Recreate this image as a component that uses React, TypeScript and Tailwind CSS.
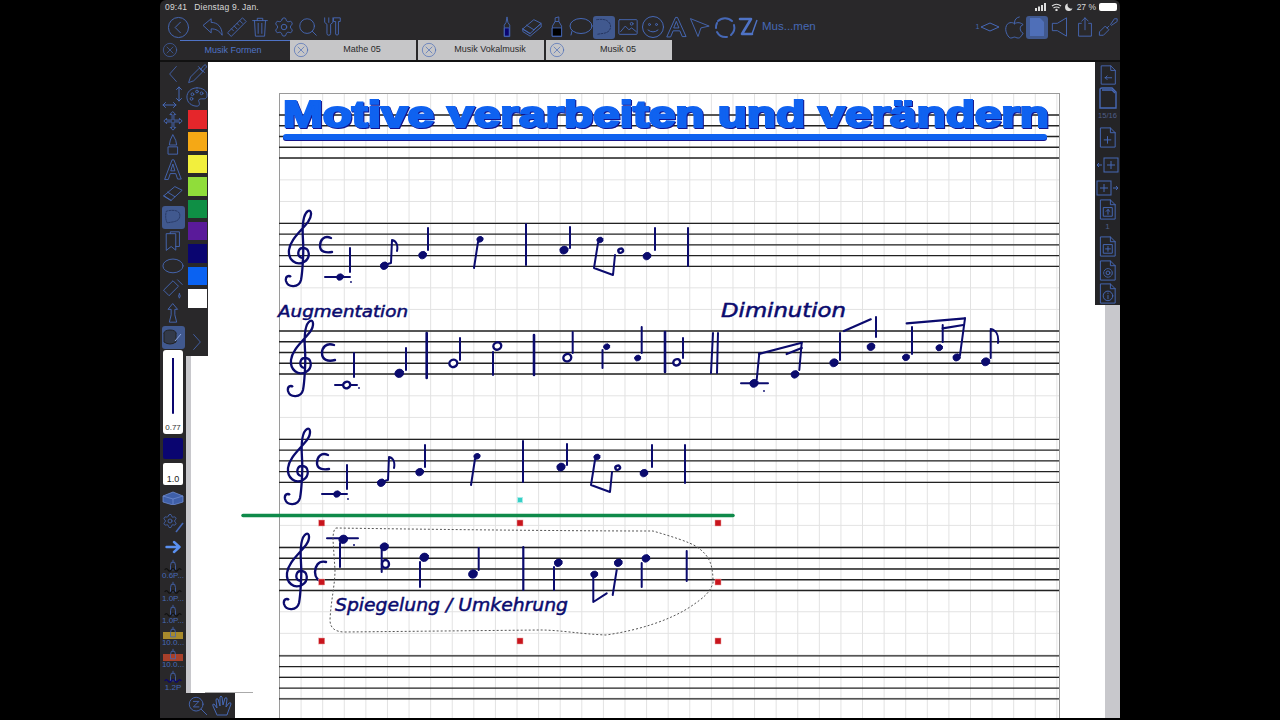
import React from "react"
import { Search, Settings } from "lucide-react"

const NAVY = "#0b0b6e"
const ICON = "#4668b6"
const DASH = "#23325c"
const SWATCHES = ["bg-[#e5262b]", "bg-[#f5a815]", "bg-[#f2ef3d]", "bg-[#90dd3a]", "bg-[#0f8f45]", "bg-[#5a1a9a]", "bg-[#0a0570]", "bg-[#0a62f2]", "bg-white"]

// Shared wrapper for the outlined toolbar icons
const Ic = ({ s = 22, children, className = "" }: { s?: number; children: React.ReactNode; className?: string }) => (
	<svg width={s} height={s} viewBox="0 0 24 24" fill="none" stroke={ICON} strokeWidth={1} strokeLinejoin="round" strokeLinecap="round" className={className}>
		{children}
	</svg>
)

const Slot = ({ w, children, active }: { w: string; children?: React.ReactNode; active?: boolean }) => (
	<div className={`${w} h-full flex-none flex items-center justify-center`}>
		{active ? <div className="w-[23px] h-[23px] rounded-[3px] bg-[#41598f] flex items-center justify-center">{children}</div> : children}
	</div>
)

const TABS = ["Mathe 05", "Musik Vokalmusik", "Musik 05"]

const CloseCircle = ({ s = 16 }: { s?: number }) => (
	<Ic s={s}>
		<circle cx="12" cy="12" r="10" />
		<path d="M7.5 7.5l9 9M16.5 7.5l-9 9" />
	</Ic>
)

const PagePath = () => <path d="M5 2h10l5 5v15H5z M15 2v5h5" />

const TopBar = () => (
	<div className="h-[62px] flex-none flex flex-col bg-[#29282a] rounded-t-[6px]">
		<div className="h-[14px] flex items-center justify-between pl-[5px] pr-[3px] text-[8.500px] text-[#d8d8d8]">
			<span className="flex gap-[7px] tracking-[0.2px]">
				<span>09:41</span>
				<span>Dienstag 9. Jan.</span>
			</span>
			<span className="flex items-center gap-[3px]">
				<svg width="13" height="8" viewBox="0 0 13 8" fill="#ddd">
					<rect x="0" y="5" width="2" height="3" />
					<rect x="3" y="3.5" width="2" height="4.5" />
					<rect x="6" y="2" width="2" height="6" />
					<rect x="9" y="0" width="2" height="8" />
				</svg>
				<svg width="11" height="8" viewBox="0 0 11 8" fill="none" stroke="#ddd" strokeWidth="1.2">
					<path d="M1 3q4.500-3.500 9 0M2.500 5q3-2 6 0" />
					<circle cx="5.500" cy="7" r="0.600" fill="#ddd" />
				</svg>
				<svg width="8" height="8" viewBox="0 0 8 8" fill="#ddd">
					<path d="M3 0.500a3.800 3.800 0 1 0 4.500 4.800a3.500 3.500 0 0 1-4.500-4.800z" />
				</svg>
				<span className="ml-[1px]">27 %</span>
				<span className="w-[18px] h-[8px] rounded-[2px] bg-white" />
			</span>
		</div>

		<div className="h-[26px] flex items-center">
			<div className="w-[6px] flex-none" />
			<Slot w="w-[24px]">
				<Ic s={23}>
					<circle cx="12" cy="12" r="10.500" />
					<path d="M14 6.500L8.500 12l5.500 5.500" />
				</Ic>
			</Slot>
			<div className="w-[11px] flex-none" />
			<Slot w="w-[24px]">
				<Ic>
					<path d="M1.500 10L10 3v4c7 0 12 5 12 14-3-5-7-7-12-7v4z" />
				</Ic>
			</Slot>
			<Slot w="w-[23px]">
				<Ic>
					<path d="M2 18L18 2l4 4L6 22zM6 14l2 2M9 11l3 3M12 8l2 2M15 5l3 3" />
				</Ic>
			</Slot>
			<Slot w="w-[24px]">
				<Ic>
					<path d="M4 5h16M9 5V2.500h6V5M6 5l1 17h10l1-17M10 8v11M14 8v11" />
				</Ic>
			</Slot>
			<Slot w="w-[24px]">
				<Settings size={22} color={ICON} strokeWidth={1} />
			</Slot>
			<Slot w="w-[23px]">
				<Search size={22} color={ICON} strokeWidth={1} />
			</Slot>
			<Slot w="w-[26px]">
				<Ic>
					<path d="M4 2v5l2.500 2v10a2 2 0 0 0 4 0V9L13 7V2M8.500 2v5M14 2h7v4h-2v14a2 2 0 0 1-3 0V6h-2z" />
				</Ic>
			</Slot>
			<div className="w-[150px] flex-none" />
			<Slot w="w-[24px]">
				<Ic>
					<path d="M9 22V10l2-3 1-6 1 6 2 3v12z" />
					<rect x="9.500" y="13" width="5" height="9" fill="#0a0570" />
				</Ic>
			</Slot>
			<Slot w="w-[26px]">
				<Ic>
					<path d="M2 14L14 4l8 4-12 11zM2 14l8 5M6 10l8 5M14 15l8-7v4L10 22 2 17v-3" />
				</Ic>
			</Slot>
			<Slot w="w-[24px]">
				<Ic>
					<path d="M10 6V2l4-1v5M7 22V11l3-5h4l3 5v11z" />
					<rect x="7" y="13" width="10" height="9" fill="#000" />
				</Ic>
			</Slot>
			<Slot w="w-[24px]">
				<Ic s={24}>
					<ellipse cx="12" cy="11" rx="11" ry="7.500" />
					<path d="M3 16l-1 4" />
				</Ic>
			</Slot>
			<Slot w="w-[22px]" active>
				<Ic s={22}>
					<path d="M4 4q8-1 11 1 5 3 4 8-1 5-8 6l-7 1" stroke={DASH} strokeDasharray="2 1.500" />
				</Ic>
			</Slot>
			<Slot w="w-[25px]">
				<Ic>
					<rect x="2" y="4" width="20" height="16" rx="1" />
					<path d="M4 17l5-6 4 4 3-2 5 4" />
					<circle cx="16" cy="8.500" r="1.500" />
				</Ic>
			</Slot>
			<Slot w="w-[25px]">
				<Ic s={24}>
					<circle cx="12" cy="12" r="10.500" />
					<circle cx="8.500" cy="9.500" r="1" />
					<circle cx="15.500" cy="9.500" r="1" />
					<path d="M7 15q5 4 10 0" />
				</Ic>
			</Slot>
			<Slot w="w-[23px]">
				<Ic s={24}>
					<path d="M2 22L11 2h2l9 20h-4l-2.500-6h-7L6 22zM9.500 13h5L12 6.500z" />
				</Ic>
			</Slot>
			<Slot w="w-[24px]">
				<Ic>
					<path d="M2 3l20 8-9 2-3 9z" />
				</Ic>
			</Slot>
			<Slot w="w-[25px]">
				<Ic s={24}>
					<path d="M5 6a10 10 0 0 1 14 0M21 10a10 10 0 0 1-3 10M14 22a10 10 0 0 1-10-5M3 13a10 10 0 0 1 1-5" strokeWidth={2} />
				</Ic>
			</Slot>
			<Slot w="w-[22px]">
				<svg width="22" height="22" viewBox="0 0 22 22" fill="none" stroke="#4f73c6">
					<path d="M3 3h11L5 18h10" strokeWidth="2.600" strokeLinecap="round" strokeLinejoin="round" />
					<path d="M20 4l-5 14" strokeWidth="1.400" />
				</svg>
			</Slot>
			<span className="ml-[3px] text-[11.500px] text-[#4668b6]">Mus...men</span>
			<div className="flex-1" />
			<Slot w="w-[28px]">
				<span className="text-[7px] text-[#4668b6] mr-[1px]">1</span>
				<svg width="20" height="10" viewBox="0 0 20 10" fill="none" stroke={ICON}>
					<path d="M1 5l9-4 9 4-9 4z" />
				</svg>
			</Slot>
			<Slot w="w-[24px]">
				<Ic s={23}>
					<path d="M12 8c-2-2-8-2-9 4-1 5 3 11 5 11s3-1 4-1 2 1 4 1 3-2 5-5c-4-2-4-8 0-9-2-2-6-3-9-1zM12 7q0-5 5-6" />
				</Ic>
			</Slot>
			<Slot w="w-[22px]" active>
				<svg width="16" height="20" viewBox="0 0 16 20" fill="#4f6fb8">
					<path d="M1 1h10l4 4v14H1z" />
				</svg>
			</Slot>
			<Slot w="w-[26px]">
				<Ic>
					<path d="M3 8h5l10-6v20L8 16H3z" />
				</Ic>
			</Slot>
			<Slot w="w-[22px]">
				<Ic>
					<path d="M8 8H5v14h14V8h-3M12 15V2M8.500 5.500L12 2l3.500 3.500" />
				</Ic>
			</Slot>
			<Slot w="w-[24px]">
				<Ic>
					<path d="M3 17l6-6 4 4-6 6H3zM15 9l4-6h3v3l-6 4zM11 13l2-2" />
				</Ic>
			</Slot>
		</div>

		<div className="h-[20px] flex items-stretch">
			<div className="w-[20px] flex-none flex items-center justify-center">
				<CloseCircle />
			</div>
			<div className="w-[110px] flex-none border-t border-[#4f73c6] flex items-center justify-center pr-[4px] text-[9px] text-[#4f73c6]">Musik Formen</div>
			<div className="flex gap-[2px]">
				{TABS.map((tab) => (
					<div key={tab} className="w-[126px] bg-[#c6c6c8] flex items-center text-[9px] text-[#2a2a2a]">
						<div className="w-[20px] pl-[2px] flex-none flex justify-center">
							<CloseCircle />
						</div>
						<span className="flex-1 text-center pr-[2px]">{tab}</span>
					</div>
				))}
			</div>
		</div>
		<div className="h-[2px] bg-[#111]" />
	</div>
)

const TOOLS = [
	<path key="m" d="M12 2l3 3h-2v6h6V9l3 3-3 3v-2h-6v6h2l-3 3-3-3h2v-6H5v2l-3-3 3-3v2h6V5H9z" />,
	<path key="p" d="M12 1l3 6 1 5H8l1-5zM7 14h10v8H7z" />,
	<path key="a" d="M3 23L11 2h2l8 21h-4l-2-6H9l-2 6zM10 14h4l-2-7z" />,
	<path key="e" d="M2 15L14 5l8 4-12 11zM2 15l8 5M6 11l8 5" />,
	null,
	<path key="b" d="M5 4h10v18l-5-4-5 4zM9 4V2h10v16h-4" />,
	<ellipse key="l" cx="12" cy="13" rx="11" ry="7.500" />,
	<path key="o" d="M2 13L12 3l6 6-10 10zM17 2l5 5M19 17q-2 3 0 5 2-2 0-5" />,
	<path key="u" d="M12 2l5 6h-3v6l2 8H8l2-8V8H7z" />,
]

const PRESETS = [
	{ label: "0.6P...", wave: "#111", band: "" },
	{ label: "1.0P...", wave: "#111", band: "" },
	{ label: "1.0P...", wave: "#111", band: "" },
	{ label: "10.0...", wave: "", band: "bg-[#a88a2c]" },
	{ label: "10.0...", wave: "", band: "bg-[#a8402a]" },
	{ label: "1.2P", wave: "#0a0570", band: "" },
]

const Preset = ({ label, wave, band }: { label: string; wave: string; band: string }) => (
	<div className="h-[22.300px] relative flex flex-col items-center justify-end overflow-hidden">
		{band && <div className={`absolute left-[3px] right-[3px] top-[6px] h-[7px] ${band}`} />}
		<svg width="22" height="16" viewBox="0 0 22 16" fill="none" stroke={ICON} className="relative">
			<path d="M11 1v3M8 8l1-4h4l1 4v5H8z" />
			{wave && <path d="M1 13q2-3 4 0t4 0 4 0 4 0 4 0" stroke={wave} strokeWidth="1.400" />}
		</svg>
		<span className="text-[8px] leading-[8px] mb-[1px] text-[#4668b6] relative">{label}</span>
	</div>
)

const LeftRail = () => (
	<div className="w-[48px] flex-none flex relative z-10">
		<div className="w-[26px] flex-none bg-[#29282a] flex flex-col">
			<div className="h-[23px] flex items-center justify-center">
				<Ic s={20}>
					<path d="M16 3l-8 9 8 9" />
				</Ic>
			</div>
			<div className="h-[24px] flex items-center justify-center">
				<Ic s={24}>
					<path d="M18 2v14M15.500 4.500L18 2l2.500 2.500M15.500 13.500L18 16l2.500-2.500M2 20h13M4.500 17.500L2 20l2.500 2.500M12.500 17.500L15 20l-2.500 2.500" />
				</Ic>
			</div>
			{TOOLS.map((tool, i) => (
				<div key={i} className="h-[24px] flex items-center justify-center">
					{tool ? (
						<Ic s={22}>{tool}</Ic>
					) : (
						<div className="w-[23px] h-[23px] rounded-[3px] bg-[#41598f] flex items-center justify-center">
							<Ic s={20}>
								<path d="M4 5q8-2 13 0 4 2 3 7-1 5-9 6l-6 1q-3-6-1-14z" stroke={DASH} strokeDasharray="2 1.500" />
							</Ic>
						</div>
					)}
				</div>
			))}
			<div className="h-[24px] flex items-center justify-center">
				<div className="w-[23px] h-[23px] rounded-[3px] bg-[#41598f] flex items-center justify-center">
					<svg width="20" height="18" viewBox="0 0 20 18" fill="#333a4a" stroke="#222">
						<ellipse cx="7" cy="5" rx="6" ry="3" />
						<path d="M1 5v9q6 4 12 0V5" />
						<path d="M12 13l6-7" stroke="#8fa8e0" />
					</svg>
				</div>
			</div>
			<div className="h-[84px] mt-[1px] mx-[3px] flex-none rounded-[3px] bg-white flex flex-col items-center justify-end pb-[1px]">
				<div className="w-[2px] h-[56px] mb-[9px] bg-[#0a0570] rounded-b-full" />
				<span className="text-[8px] leading-[10px] text-[#333]">0.77</span>
			</div>
			<div className="h-[21px] mt-[4px] mx-[3px] flex-none rounded-[2px] bg-[#0a0570]" />
			<div className="h-[22px] mt-[4px] mx-[3px] flex-none rounded-[2px] bg-white flex items-end justify-center">
				<span className="text-[9px] leading-[11px] text-[#222]">1.0</span>
			</div>
			<div className="h-[26px] flex items-center justify-center">
				<svg width="22" height="14" viewBox="0 0 22 14" fill="#3f5fa8" stroke="#6f8cd0" strokeWidth="0.800">
					<path d="M1 5l10-4 10 4v6l-10 3-10-3z" />
					<path d="M1 5l10 3 10-3M11 8v6" fill="none" />
				</svg>
			</div>
			<div className="h-[24px] flex items-center justify-center">
				<Settings size={16} color={ICON} strokeWidth={1.2} className="mb-[4px]" />
				<svg width="9" height="11" viewBox="0 0 9 11" fill="none" stroke={ICON} strokeWidth="1.600" className="-ml-[3px] mt-[8px]">
					<path d="M1 10l7-9" />
				</svg>
			</div>
			<div className="h-[24px] flex items-center justify-center">
				<svg width="16" height="14" viewBox="0 0 16 14" fill="none" stroke="#5a90f0" strokeWidth="2.400" strokeLinecap="round" strokeLinejoin="round">
					<path d="M1.500 7h13M9 2l5.500 5L9 12" />
				</svg>
			</div>
			<div className="h-[133px] flex-none overflow-hidden">
				{PRESETS.map((preset, i) => (
					<Preset key={i} {...preset} />
				))}
			</div>
		</div>

		<div className="w-[22px] flex-none flex flex-col">
			<div className="h-[294px] flex-none bg-[#29282a] flex flex-col items-center">
				<div className="h-[23px] flex-none flex items-center justify-center">
					<Ic s={21}>
						<path d="M2 22l2-6L14 6l4 4L8 20zM13 4l7 7M16 7l3-4q2-2 3 0t-1 3l-3 3" />
					</Ic>
				</div>
				<div className="h-[24px] flex-none flex items-center justify-center">
					<Ic s={22}>
						<path d="M12 2C5 2 1 7 1 12c0 6 5 10 11 10 3 0 3-3 2-5s1-3 3-3h3c2 0 3-2 3-4 0-5-5-8-11-8z" />
						<circle cx="7" cy="9" r="1.500" />
						<circle cx="12" cy="6" r="1.500" />
						<circle cx="17" cy="8" r="1.500" />
						<circle cx="6" cy="14" r="1.500" />
					</Ic>
				</div>
				<div className="mt-[1px] flex flex-col gap-[3.900px] pl-[1px]">
					{SWATCHES.map((swatch) => (
						<div key={swatch} className={`w-[19px] h-[18.500px] ${swatch}`} />
					))}
				</div>
				<div className="mt-[24px]">
					<Ic s={20}>
						<path d="M8 3l8 9-8 9" />
					</Ic>
				</div>
			</div>
			<div className="flex-1 flex flex-col bg-white">
				<div className="flex-1 w-[5px] bg-[#c8c8cc]" />
				<div className="relative h-[25px] w-[49px] flex-none bg-[#29282a] flex items-center justify-around">
					<div className="absolute left-[19px] top-[-1px] w-[48px] h-[1px] bg-[#aaa]" />
					<Ic s={22}>
						<circle cx="10" cy="10" r="7.500" />
						<path d="M7 7h6l-6 6h6M15.500 15.500l6 6" />
					</Ic>
					<Ic s={24}>
						<path d="M7 21L3 12q-1-2 1-2l3 4-1-8q0-2 2-1l2 7V3q1-2 2 0l1 8 2-7q2-1 2 1l-1 8 3-4q2-1 2 1l-3 8-1 3H8z" />
					</Ic>
				</div>
			</div>
		</div>
	</div>
)

const RightRail = () => (
	<div className="w-[25px] flex-none flex flex-col">
		<div className="h-[243px] flex-none bg-[#242427] flex flex-col items-center pt-[1px]">
			<div className="h-[24px] flex items-center">
				<Ic s={22}>
					<PagePath />
					<path d="M9 15h7M9 15l2-2M9 15l2 2" />
				</Ic>
			</div>
			<div className="h-[23px] flex items-center">
				<svg width="20" height="24" viewBox="0 0 20 24" fill="none" stroke={ICON} strokeWidth="1.400">
					<path d="M2 4q0-2 2-2h10l4 4v16H2z" />
					<path d="M4 4h10l3 3" />
				</svg>
			</div>
			<div className="h-[13px] flex items-center text-[7.500px] text-[#4f5f88]">15/16</div>
			<div className="h-[27px] flex items-end">
				<Ic s={23}>
					<PagePath />
					<path d="M12 11v7M8.500 14.500h7" />
				</Ic>
			</div>
			<div className="h-[24px] flex items-end">
				<svg width="23" height="16" viewBox="0 0 23 16" fill="none" stroke={ICON}>
					<rect x="8" y="1" width="14" height="14" />
					<path d="M15 4v8M11 8h8M1 8h5M3 6L1 8l2 2" />
				</svg>
			</div>
			<div className="h-[24px] flex items-end">
				<svg width="23" height="16" viewBox="0 0 23 16" fill="none" stroke={ICON}>
					<rect x="1" y="1" width="14" height="14" />
					<path d="M8 4v8M4 8h8M17 8h5M20 6l2 2-2 2" />
				</svg>
			</div>
			<div className="h-[25px] flex items-end">
				<Ic s={23}>
					<PagePath />
					<rect x="8" y="10" width="9" height="9" />
					<path d="M12.500 17v-5M10.500 14l2-2 2 2" />
				</Ic>
			</div>
			<div className="h-[13px] flex items-center text-[8px] text-[#4f5f88]">1</div>
			<div className="h-[25px] flex items-center">
				<Ic s={23}>
					<PagePath />
					<rect x="8" y="10" width="9" height="9" />
					<path d="M12.500 12v5M10 14.500h5" />
				</Ic>
			</div>
			<div className="h-[24px] flex items-center">
				<Ic s={23}>
					<PagePath />
					<circle cx="12.500" cy="14.500" r="2" />
					<circle cx="12.500" cy="14.500" r="4.500" strokeDasharray="2 1.200" />
				</Ic>
			</div>
			<div className="h-[23px] flex items-center">
				<Ic s={23}>
					<PagePath />
					<circle cx="12.500" cy="14.500" r="5" />
					<path d="M12.500 14v3.500M12.500 11.500v.5" />
				</Ic>
			</div>
		</div>
		<div className="flex-1 flex">
			<div className="w-[10px] bg-white" />
			<div className="flex-1 bg-[#c8c8cc]" />
		</div>
	</div>
)

const STAFF_TOPS = [115, 223.3, 331, 439.3, 547.5, 655.8]

const Staves = () => (
	<g stroke="#222" strokeWidth="1.300">
		{STAFF_TOPS.map((top) =>
			[0, 1, 2, 3, 4].map((n) => <line key={`${top}-${n}`} x1="279" x2="1059" y1={top + n * 10.75} y2={top + n * 10.75} />)
		)}
	</g>
)

const Head = ({ x, y, r = 3.500, open }: { x: number; y: number; r?: number; open?: boolean }) => (
	<ellipse
		cx={x}
		cy={y}
		rx={r}
		ry={r - 0.400}
		transform={`rotate(-25 ${x} ${y})`}
		fill={open ? "#fff" : NAVY}
		stroke={NAVY}
		strokeWidth={open ? 2.400 : 0.800}
	/>
)

const Clef = ({ dx, dy }: { dx: number; dy: number }) => (
	<path
		transform={`translate(${dx} ${dy})`}
		d="M302 258C296 256 298 248 303 248C310 248 311 258 304 262C296 266 288 260 289 250C290 240 300 232 308 222C313 215 311 209 308 211C303 214 302 225 303 240C304 255 302 275 301 280C299 288 288 288 286 281C285 276 289 275 291 277"
		fill="none"
		stroke={NAVY}
		strokeWidth="2.300"
	/>
)

// The first motif, written out twice on the page
const Motif = ({ dx = 0, dy = 0 }: { dx?: number; dy?: number }) => (
	<g transform={`translate(${dx} ${dy})`}>
		<path d="M331 238C324 235 320 240 320 246C320 252 326 253 332 252" strokeWidth="2.400" />
		<path d="M325 277H350M350 248V272M384 265L391 263L392 240C397 241 398 246 397 251M428 228V250M474 268L478 242M526 224L526 265M570 227V248M598 243L594 268L613 275L615 255M655 228V250M688 228V266" />
		<Head x={340} y={277} />
		<circle cx={351} cy={282} r={0.900} fill={NAVY} stroke="none" />
		<Head x={384.300} y={265.700} r={4} />
		<Head x={422.700} y={255} r={4} />
		<Head x={480} y={239.300} r={3.200} />
		<Head x={564} y={250} r={4.200} />
		<Head x={600} y={240} r={3.200} />
		<Head x={620.700} y={250.700} r={2.400} open />
		<Head x={647} y={256} r={4} />
	</g>
)

const Notation = () => (
	<svg viewBox="279 93 781 625" className="absolute left-[-1px] top-[-1px] w-[781px] h-[625px] overflow-visible">
		<Staves />

		<text x="283" y="127" fontFamily="'Liberation Sans', sans-serif" fontWeight="700" fontSize="37" textLength="766" lengthAdjust="spacingAndGlyphs" fill="#0f62f0" stroke="#0f62f0" strokeWidth="2.200" className="drop-shadow-[1.500px_1.500px_0_#14148c]">
			Motive verarbeiten und verändern
		</text>
		<rect x="283" y="134" width="764" height="6" rx="3" fill="#0f62f0" className="drop-shadow-[0.500px_1.500px_0_#14148c]" />

		<Clef dx={0} dy={0} />
		<Clef dx={2} dy={110} />
		<Clef dx={-1} dy={218} />
		<Clef dx={-2} dy={323} />

		<g fill="none" stroke={NAVY} strokeWidth="2" strokeLinecap="round" strokeLinejoin="round">
			<Motif />
			<Motif dx={-3} dy={217} />

			<path d="M334 345C326 342 322 348 322 353C322 360 328 362 335 360" strokeWidth="2.400" />
			<path d="M335 385H357M354 353V377M406 348V370M460 338V360M493 352V375M572.700 332V353M602.500 350V368M641.700 327V353M683 338V358" />
			<path d="M426.700 333V378M534 335V375M665 332V372" strokeWidth="2.600" />
			<Head x={346.700} y={385} r={3.600} open />
			<circle cx={359} cy={388} r={0.900} fill={NAVY} stroke="none" />
			<Head x={399.300} y={373.300} r={4.500} />
			<Head x={453.300} y={363.300} r={4} open />
			<Head x={497.300} y={346} r={4} open />
			<Head x={567.300} y={357.700} r={4} open />
			<Head x={606.700} y={346.700} r={3.200} />
			<Head x={637.700} y={358} r={3.200} />
			<Head x={676.700} y={362.300} r={3.500} open />

			<path d="M713 333L711 373M718 333L717 373" />
			<path d="M741 383.300H768M759.300 353.300L756.700 380M801.700 342.700L799.300 370M840 333V360M876 317V337M912 327V354M942.700 325V342M965 318.300L960 355M990.700 330V358M990.700 329C996 330 999 335 998 343" />
			<path d="M759 354L801.700 342.700M786.700 354L801.700 348M844 331L870.700 319.300M906.700 323.300L965 318.300M942.700 328.300L963.300 325" strokeWidth="2.200" />
			<Head x={754} y={383.300} r={4.200} />
			<circle cx={764} cy={391} r={0.900} fill={NAVY} stroke="none" />
			<Head x={795} y={374.300} r={4} />
			<Head x={834} y={362.700} r={4.200} />
			<Head x={871} y={346.700} r={4} />
			<Head x={906} y={357.300} r={3.600} />
			<Head x={939.300} y={347.700} r={3.400} />
			<Head x={956.700} y={357.300} r={3.800} />
			<Head x={985.700} y={361.700} r={4.200} />

			<path d="M326 562C318 560 315 567 315 572C315 578 319 582 323 581" strokeWidth="2.400" />
			<path d="M327 538.300H358M340 543V567M381.700 550V572M420 562V587M478.700 548V570M554 567V590M593.300 578V602L606.700 593.300M616.700 570L612.700 595M641.700 563V587M686.700 551V581" />
			<path d="M523.300 547V590" strokeWidth="2.200" />
			<Head x={343.300} y={539.300} r={4.500} />
			<circle cx={354} cy={545} r={1} fill={NAVY} stroke="none" />
			<Head x={384.300} y={546.700} r={4.200} />
			<ellipse cx={385.500} cy={564} rx={3.500} ry={4} strokeWidth="2.400" />
			<Head x={424.300} y={557.300} r={4.500} />
			<Head x={473} y={574} r={4.500} />
			<Head x={558.300} y={562.700} r={4} />
			<Head x={594.300} y={574.300} r={3.600} />
			<Head x={618.300} y={562.700} r={4} />
			<Head x={646} y={558.300} r={4} />
		</g>

		<g fill={NAVY} stroke={NAVY} strokeWidth="0.500" fontFamily="'DejaVu Sans', sans-serif" fontStyle="italic">
			<text x="278" y="317" fontSize="16" textLength="130" lengthAdjust="spacingAndGlyphs">Augmentation</text>
			<text x="721" y="317" fontSize="19" textLength="125" lengthAdjust="spacingAndGlyphs">Diminution</text>
			<text x="335" y="611" fontSize="18" textLength="233" lengthAdjust="spacingAndGlyphs">Spiegelung / Umkehrung</text>
		</g>

		<path d="M243 515.500H733" stroke="#0f8a4a" strokeWidth="3.500" strokeLinecap="round" />

		<path
			d="M336 528C400 529 560 531 653 531C670 536 690 542 697 547C710 556 713 565 713 583C710 592 705 597 690 607C670 620 640 630 606 635C580 634 560 630 540 630L345 632C335 632 330 628 330 620C331 600 335 585 335 570L333 540C333 533 334 529 336 528Z"
			fill="none"
			stroke="#555"
			strokeWidth="1"
			strokeDasharray="2 2"
		/>

		{[
			[321.700, 523],
			[520, 523],
			[718, 523],
			[321.700, 582],
			[718, 582],
			[321.700, 641],
			[520, 641],
			[718, 641],
		].map(([x, y]) => (
			<rect key={`${x}-${y}`} x={x - 3} y={y - 3} width="6" height="6" fill="#c8141c" stroke="#e8a0a0" strokeWidth="0.500" />
		))}
		<rect x="517.500" y="497.500" width="5" height="5" fill="#35cfc6" stroke="#a8ece8" strokeWidth="1" />
	</svg>
)

const Sheet = () => (
	<div className="flex-1 min-w-0 bg-white pl-[71px] pt-[31px]">
		<div className="relative w-[781px] h-[625px] border-x border-t border-[#9a9a9a] bg-[linear-gradient(#e2e2e2_1px,transparent_1px),linear-gradient(90deg,#e2e2e2_1px,transparent_1px)] bg-[size:21.600px_21.600px] bg-[position:-1px_-1px]">
			<Notation />
		</div>
	</div>
)

const App: React.FC = () => (
	<div className="w-[1280px] h-[720px] bg-black flex justify-center overflow-hidden font-['Liberation_Sans',sans-serif]">
		<div className="w-[960px] h-[718px] flex flex-col">
			<TopBar />
			<div className="flex-1 min-h-0 flex">
				<LeftRail />
				<Sheet />
				<RightRail />
			</div>
		</div>
	</div>
)

export default App
